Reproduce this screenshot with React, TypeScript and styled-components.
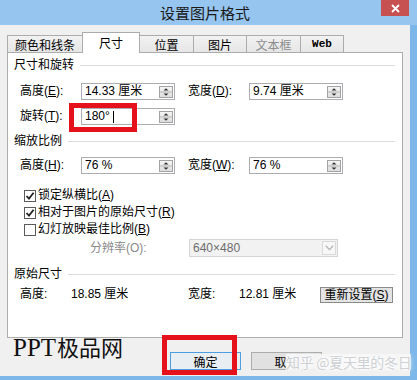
import React from 'react';
import styled, { createGlobalStyle } from 'styled-components';

const GlobalStyle = createGlobalStyle`
  html, body { margin: 0; padding: 0; background: #ffffff; }
  body {
    width: 417px; height: 380px; overflow: hidden;
    font-family: "Liberation Sans", "Noto Sans CJK SC", sans-serif;
    font-size: 12px; color: #000;
  }
  * { box-sizing: border-box; }
`;

const Window = styled.div`
  position: relative;
  width: 417px;
  height: 380px;
  background: #7db7ea;
  display: flex;
  flex-direction: column;
  overflow: hidden;
`;

const TitleBar = styled.div`
  flex: none;
  height: 25px;
  background: #96c6f0;
  display: flex;
  align-items: flex-start;
`;

const Title = styled.div`
  flex: 1;
  height: 25px;
  padding-left: 29px;
  text-align: center;
  font-family: "Noto Sans CJK SC", sans-serif;
  font-size: 15px;
  line-height: 25px;
  color: #1a1a1a;
`;

const CloseButton = styled.div`
  width: 28px;
  height: 16px;
  margin-right: 8px;
  background: #c75050;
  color: #fff;
  display: flex;
  align-items: center;
  justify-content: center;
`;

const BodyRow = styled.div`
  flex: none;
  height: 351px;
  display: flex;
`;

const Client = styled.div`
  width: 410px;
  height: 351px;
  background: #f0f0f0;
  padding: 7px 7px 0 7px;
  display: flex;
  flex-direction: column;
`;

const TabRow = styled.div`
  flex: none;
  height: 21px;
  margin-bottom: -1px;
  display: flex;
  align-items: flex-end;
  position: relative;
  z-index: 1;
`;

const Tab = styled.div<{ $w: number; $active?: boolean; $disabled?: boolean; $mono?: boolean }>`
  width: ${p => p.$w}px;
  height: ${p => (p.$active ? 21 : 18)}px;
  margin-left: -1px;
  &:first-child { margin-left: 0; }
  border: 1px solid #acacac;
  border-bottom: ${p => (p.$active ? 'none' : '1px solid #acacac')};
  background: ${p => (p.$active ? '#ffffff' : 'linear-gradient(#f2f2f2, #e6e6e6)')};
  color: ${p => (p.$disabled ? '#8d8d8d' : '#000')};
  font-family: ${p => (p.$mono ? '"Liberation Mono", monospace' : '"Noto Sans CJK SC", sans-serif')};
  font-size: ${p => (p.$mono ? 11 : 12)}px;
  font-weight: ${p => (p.$mono ? 700 : 400)};
  display: flex;
  align-items: center;
  justify-content: center;
  position: relative;
  z-index: ${p => (p.$active ? 2 : 1)};
  padding-bottom: ${p => (p.$active ? 1 : 0)}px;
`;

const Panel = styled.div`
  flex: none;
  height: 286px;
  border: 1px solid #adadad;
  background: #ffffff;
  display: flex;
  flex-direction: column;
`;

const SectionHeader = styled.div<{ $mt: number }>`
  margin-top: ${p => p.$mt}px;
  height: 16px;
  padding: 0 7px 0 6px;
  display: flex;
  align-items: center;
  font-family: "Noto Sans CJK SC", sans-serif;
  font-size: 12px;
  line-height: 16px;
`;

const HeaderLine = styled.div`
  flex: 1;
  height: 1px;
  margin-left: 6px;
  margin-top: 2px;
  background: #dcdcdc;
`;

const FieldRow = styled.div<{ $mt: number }>`
  margin-top: ${p => p.$mt}px;
  margin-left: 12px;
  height: 17px;
  display: grid;
  grid-template-columns: 61px 94px 13px 61px 94px;
  align-items: center;
`;

const Label = styled.div<{ $muted?: boolean }>`
  white-space: nowrap;
  line-height: 17px;
  color: ${p => (p.$muted ? '#8a8a8a' : '#000')};
`;

const SpinBox = styled.div`
  width: 94px;
  height: 17px;
  border: 1px solid #abadb3;
  background: #fff;
  display: flex;
  align-items: center;
  padding: 0 1px 0 3px;
`;

const SpinValue = styled.div`
  flex: 1;
  display: flex;
  align-items: center;
  white-space: pre;
  line-height: 15px;
`;

const Caret = styled.span`
  display: inline-block;
  width: 1px;
  height: 12px;
  background: #000;
`;

const CheckRow = styled.div<{ $mt?: number }>`
  margin-top: ${p => p.$mt || 0}px;
  margin-left: 16px;
  height: 17px;
  display: flex;
  align-items: center;
  gap: 2px;
`;

const CheckBox = styled.div`
  width: 12px;
  height: 12px;
  border: 1px solid #5a5a5a;
  background: #fff;
  display: flex;
  align-items: center;
  justify-content: center;
`;

const ResRow = styled.div`
  margin-top: 1px;
  margin-left: 82px;
  height: 18px;
  display: grid;
  grid-template-columns: 99px 149px;
  align-items: center;
`;

const Select = styled.div`
  width: 149px;
  height: 18px;
  border: 1px solid #d4d4d4;
  background: #f2f2f2;
  color: #6d6d6d;
  display: flex;
  align-items: center;
  padding: 0 1px 0 3px;
`;

const SelectText = styled.div`
  flex: 1;
`;

const SelectArrow = styled.div`
  width: 14px;
  height: 14px;
  border: 1px solid #dadada;
  background: #f7f7f7;
  display: flex;
  align-items: center;
  justify-content: center;
`;

const OrigRow = styled.div`
  margin-top: 5px;
  margin-left: 12px;
  height: 17px;
  display: grid;
  grid-template-columns: 51px 117px 51px 81px 73px;
  align-items: center;
`;

const SmallButton = styled.div`
  width: 73px;
  height: 16px;
  border: 1px solid #8a8a8a;
  background: #e3e3e3;
  display: flex;
  align-items: center;
  justify-content: center;
  white-space: nowrap;
  line-height: 14px;
`;

const ButtonRow = styled.div`
  flex: none;
  padding: 14px 0 0 163px;
  display: flex;
  gap: 10px;
`;

const DialogButton = styled.div<{ $default?: boolean }>`
  width: 71px;
  height: 18px;
  border: 1px solid ${p => (p.$default ? '#4d9ee0' : '#acacac')};
  background: ${p => (p.$default ? '#e9eef3' : '#e1e1e1')};
  display: flex;
  align-items: center;
  justify-content: center;
  font-family: "Noto Sans CJK SC", sans-serif;
  font-size: 12px;
`;

const BottomFrame = styled.div`
  flex: none;
  height: 4px;
`;

const RedBox = styled.div<{ $x: number; $y: number; $w: number; $h: number }>`
  position: absolute;
  left: ${p => p.$x}px;
  top: ${p => p.$y}px;
  width: ${p => p.$w}px;
  height: ${p => p.$h}px;
  border: 5px solid #e5121b;
  pointer-events: none;
  z-index: 5;
`;

const SiteMark = styled.div`
  position: absolute;
  left: 13px;
  top: 335px;
  font-family: "Liberation Serif", "Noto Sans CJK SC", serif;
  font-size: 25px;
  line-height: 25px;
  color: #111;
  white-space: nowrap;
  z-index: 6;
`;

const SiteMarkCjk = styled.span`
  font-size: 22px;
  margin-left: 1px;
`;

const ZhihuMark = styled.div`
  position: absolute;
  left: 286px;
  top: 354px;
  font-family: "Noto Sans CJK SC", sans-serif;
  font-size: 14px;
  line-height: 16px;
  color: #cdd0d4;
  white-space: nowrap;
  letter-spacing: -0.3px;
  text-shadow: 0 0 2px #fff, 0 0 4px #fff, 0 0 6px #fff;
  background: linear-gradient(90deg, rgba(248,248,248,0.9), rgba(248,248,248,0.7));
  z-index: 6;
`;

const Spinner = () => (
  <svg width="14" height="12" viewBox="0 0 14 12">
    <defs>
      <linearGradient id="sg" x1="0" y1="0" x2="0" y2="1">
        <stop offset="0" stopColor="#f6f6f6" />
        <stop offset="1" stopColor="#dcdcdc" />
      </linearGradient>
    </defs>
    <rect x="0.5" y="0.5" width="13" height="11" fill="url(#sg)" stroke="#a3a3a3" />
    <line x1="1" y1="6" x2="13" y2="6" stroke="#b5b5b5" />
    <path d="M7 2.2 L9.5 4.6 L4.5 4.6 Z" fill="#333" />
    <path d="M7 9.8 L9.5 7.4 L4.5 7.4 Z" fill="#333" />
  </svg>
);

const CheckMark = () => (
  <svg width="10" height="10" viewBox="0 0 10 10">
    <path d="M1.5 5 L4 7.6 L8.6 1.8" fill="none" stroke="#222" strokeWidth="1.8" />
  </svg>
);

const Chevron = () => (
  <svg width="9" height="6" viewBox="0 0 9 6">
    <path d="M0.8 0.8 L4.5 4.6 L8.2 0.8" fill="none" stroke="#b4b4b4" strokeWidth="1.3" />
  </svg>
);

const CloseGlyph = () => (
  <svg width="9" height="9" viewBox="0 0 9 9">
    <path d="M1 1 L8 8 M8 1 L1 8" stroke="#fff" strokeWidth="1.8" />
  </svg>
);

const SpinField = ({ children }: { children: React.ReactNode }) => (
  <SpinBox>
    <SpinValue>{children}</SpinValue>
    <Spinner />
  </SpinBox>
);

export default function App() {
  return (
    <>
      <GlobalStyle />
      <Window>
        <TitleBar>
          <Title>设置图片格式</Title>
          <CloseButton><CloseGlyph /></CloseButton>
        </TitleBar>
        <BodyRow>
          <Client>
            <TabRow>
              <Tab $w={76}>颜色和线条</Tab>
              <Tab $w={58} $active>尺寸</Tab>
              <Tab $w={55}>位置</Tab>
              <Tab $w={54}>图片</Tab>
              <Tab $w={55} $disabled>文本框</Tab>
              <Tab $w={44} $mono>Web</Tab>
            </TabRow>
            <Panel>
              <SectionHeader $mt={3}>尺寸和旋转<HeaderLine /></SectionHeader>
              <FieldRow $mt={11}>
                <Label>高度(<u>E</u>):</Label>
                <SpinField>14.33 厘米</SpinField>
                <span />
                <Label>宽度(<u>D</u>):</Label>
                <SpinField>9.74 厘米</SpinField>
              </FieldRow>
              <FieldRow $mt={8}>
                <Label>旋转(<u>T</u>):</Label>
                <SpinField>180° <Caret /></SpinField>
              </FieldRow>
              <SectionHeader $mt={7}>缩放比例<HeaderLine /></SectionHeader>
              <FieldRow $mt={9}>
                <Label>高度(<u>H</u>):</Label>
                <SpinField>76 %</SpinField>
                <span />
                <Label>宽度(<u>W</u>):</Label>
                <SpinField>76 %</SpinField>
              </FieldRow>
              <CheckRow $mt={13}>
                <CheckBox><CheckMark /></CheckBox>
                <Label>锁定纵横比(<u>A</u>)</Label>
              </CheckRow>
              <CheckRow>
                <CheckBox><CheckMark /></CheckBox>
                <Label>相对于图片的原始尺寸(<u>R</u>)</Label>
              </CheckRow>
              <CheckRow>
                <CheckBox />
                <Label>幻灯放映最佳比例(<u>B</u>)</Label>
              </CheckRow>
              <ResRow>
                <Label $muted>分辨率(O):</Label>
                <Select>
                  <SelectText>640×480</SelectText>
                  <SelectArrow><Chevron /></SelectArrow>
                </Select>
              </ResRow>
              <SectionHeader $mt={8}>原始尺寸<HeaderLine /></SectionHeader>
              <OrigRow>
                <Label>高度:</Label>
                <Label>18.85 厘米</Label>
                <Label>宽度:</Label>
                <Label>12.81 厘米</Label>
                <SmallButton>重新设置(<u>S</u>)</SmallButton>
              </OrigRow>
            </Panel>
            <ButtonRow>
              <DialogButton $default>确定</DialogButton>
              <DialogButton>取消</DialogButton>
            </ButtonRow>
          </Client>
        </BodyRow>
        <BottomFrame />
        <RedBox $x={69} $y={103} $w={68} $h={29} />
        <RedBox $x={162} $y={335} $w={75} $h={40} />
        <SiteMark>PPT<SiteMarkCjk>极品网</SiteMarkCjk></SiteMark>
        <ZhihuMark>知乎 @夏天里的冬日</ZhihuMark>
      </Window>
    </>
  );
}
